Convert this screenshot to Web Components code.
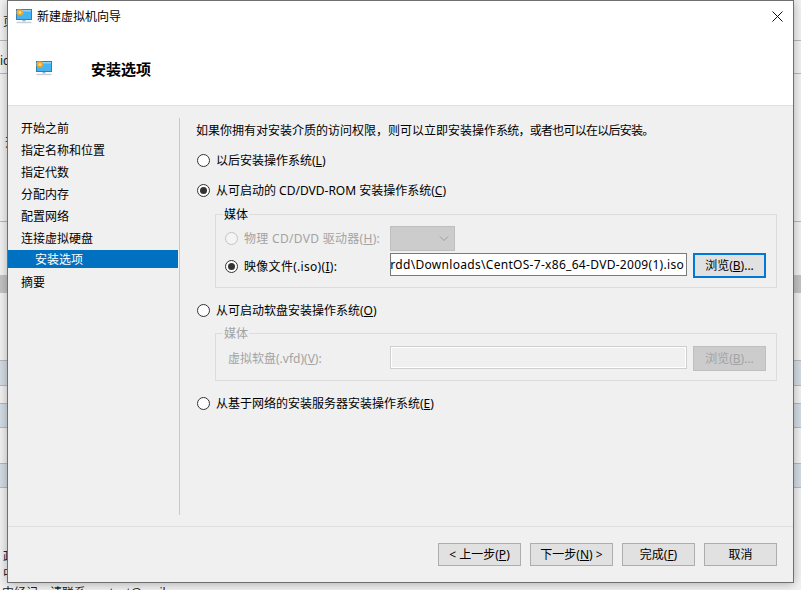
<!DOCTYPE html>
<html lang="zh-CN">
<head>
<meta charset="utf-8">
<title>新建虚拟机向导</title>
<style>
  html, body { margin: 0; height: 100%; overflow: hidden; }
  body {
    background: #f0f0f0;
    font: 12px/16px "Noto Sans", "Noto Sans CJK SC", sans-serif;
    color: #000;
  }
</style>
</head>
<body>
<host-backdrop></host-backdrop>
<wizard-window title-text="新建虚拟机向导" heading="安装选项">
  <wizard-nav slot="nav">
    <nav-item>开始之前</nav-item>
    <nav-item>指定名称和位置</nav-item>
    <nav-item>指定代数</nav-item>
    <nav-item>分配内存</nav-item>
    <nav-item>配置网络</nav-item>
    <nav-item>连接虚拟硬盘</nav-item>
    <nav-item selected>安装选项</nav-item>
    <nav-item>摘要</nav-item>
  </wizard-nav>

  <install-page>
    <div slot="intro">如果你拥有对安装介质的访问权限，则可以立即安装操作<span style="letter-spacing:-.75px">系统，或者也可以在以后安装。</span></div>
    <radio-option slot="later">以后安装操作系统(<u>L</u>)</radio-option>
    <radio-option slot="cd" checked>从可启动的 CD/DVD-ROM 安装操作系统(<u>C</u>)</radio-option>
    <group-box slot="cd-group" legend="媒体" style="--rows-top:3px">
      <media-row>
        <radio-option slot="label" disabled>物理 CD/DVD 驱动器(<u>H</u>):</radio-option>
        <drop-down slot="field"></drop-down>
      </media-row>
      <media-row>
        <radio-option slot="label" checked style="margin-top:2px">映像文件(.iso)(<u>I</u>):</radio-option>
        <path-field slot="field">rdd\Downloads\CentOS-7-x86_64-DVD-2009(1).iso</path-field>
        <win-button slot="action" focused wide>浏览(<u>B</u>)...</win-button>
      </media-row>
    </group-box>
    <radio-option slot="floppy">从可启动软盘安装操作系统(<u>O</u>)</radio-option>
    <group-box slot="floppy-group" legend="媒体" disabled style="--rows-top:4px">
      <media-row>
        <span slot="label">虚拟软盘(.vfd)(<u>V</u>):</span>
        <path-field slot="field" disabled></path-field>
        <win-button slot="action" disabled wide>浏览(<u>B</u>)...</win-button>
      </media-row>
    </group-box>
    <radio-option slot="network">从基于网络的安装服务器安装操作系统(<u>E</u>)</radio-option>
  </install-page>

  <win-button slot="footer" style="width:83px">&lt; 上一步(<u>P</u>)</win-button>
  <win-button slot="footer" style="width:83px">下一步(<u>N</u>) &gt;</win-button>
  <win-button slot="footer" style="width:73px">完成(<u>F</u>)</win-button>
  <win-button slot="footer" style="width:73px">取消</win-button>
</wizard-window>

<script>
const MONITOR_ICON = (w, h) => `
  <svg width="${w}" height="${h}" viewBox="0 0 16 16" aria-hidden="true">
    <rect x="0.5" y="1.5" width="15" height="10" fill="#45b4f5" stroke="#3a7ea8"/>
    <rect x="1" y="2" width="14" height="1.5" fill="#8ad4fa"/>
    <path d="M4 .6l.8 1.4 1.5-.7.1 1.6 1.6.3-.9 1.3.9 1.3-1.6.3-.1 1.6-1.5-.7L4 8.2l-.8-1.4-1.5.7-.1-1.6L0 5.6l.9-1.3L0 3l1.6-.3.1-1.6 1.5.7z" fill="#f5a623"/>
    <circle cx="3.9" cy="4.4" r="1.4" fill="#fbe08a"/>
    <rect x="6.5" y="12" width="3" height="1.5" fill="#9fb4c4"/>
    <rect x="0.5" y="13.8" width="15" height="1.4" fill="#c3d0da"/>
  </svg>`;

// what is visible of the application behind the dialog
class HostBackdrop extends HTMLElement {
  constructor() {
    super();
    this.attachShadow({ mode: 'open' });
    const lines = [40, 73, 221, 360, 385, 403, 427, 463, 487];
    const bands = [[361, 24], [404, 23], [464, 23]];
    this.shadowRoot.innerHTML = `
      <style>
        :host { position: absolute; inset: 0; display: block; overflow: hidden;
                background: #f3f3f3; color: #222; }
        .line { position: absolute; left: 0; right: 0; height: 1px; background: #b9b9b9; }
        .band { position: absolute; left: 0; right: 0; background: #d4dde6; }
        .grey { position: absolute; left: 0; right: 0; top: 275px; height: 18px; background: #c4c4c4; }
        .glyph { position: absolute; font-size: 12px; line-height: 16px; }
        .foot { position: absolute; left: 2px; top: 585px; white-space: nowrap; line-height: 16px; }
      </style>
      <div class="grey"></div>
      ${bands.map(([t, h]) => `<div class="band" style="top:${t}px;height:${h}px"></div>`).join('')}
      ${lines.map(t => `<div class="line" style="top:${t}px"></div>`).join('')}
      <span class="glyph" style="left:3px;top:14px">页</span>
      <span class="glyph" style="left:0;top:53px">ic</span>
      <span class="glyph" style="left:5px;top:135px">开</span>
      <span class="glyph" style="left:3px;top:549px">政</span>
      <span class="glyph" style="left:3px;top:566px">中</span>
      <span class="foot">中经记，请联系 contact@mail</span>
    `;
  }
}

class WizardWindow extends HTMLElement {
  constructor() {
    super();
    this.attachShadow({ mode: 'open' });
  }
  connectedCallback() {
    this.shadowRoot.innerHTML = `
      <style>
        :host {
          position: absolute; left: 7px; top: 0; width: 787px; height: 583px;
          box-sizing: border-box; display: flex; flex-direction: column;
          background: #f0f0f0; border: 1px solid #6f6f6f;
          box-shadow: 0 1px 10px rgba(0,0,0,.3);
        }
        .top { height: 104px; background: #fff; border-bottom: 1px solid #dfdfdf; flex: none; }
        .titlebar { height: 30px; display: flex; align-items: center; padding-left: 8px; gap: 5px; }
        .titlebar > span:first-of-type { padding-top: 2px; }
        .close { margin-left: auto; width: 32px; height: 30px; display: flex; align-items: center; justify-content: center; }
        .head { display: flex; align-items: center; padding: 14px 0 0 28px; height: 60px; box-sizing: border-box; }
        .head svg { flex: none; }
        h1 { margin: 2px 0 0 39px; font-size: 15px; line-height: 20px; font-weight: 700; }
        .body { flex: 1; display: flex; min-height: 0; }
        .nav { width: 170px; flex: none; padding-top: 11px; }
        .sep { width: 1px; background: #c9c9c9; margin: 12px 0 11px 1px; flex: none; }
        .page { flex: 1; min-width: 0; }
        .foot { height: 56px; flex: none; box-sizing: border-box; border-top: 1px solid #dfdfdf;
                display: flex; gap: 9px; justify-content: flex-end; padding: 16px 16px 0 0; }
      </style>
      <div class="top">
        <div class="titlebar">
          ${MONITOR_ICON(16, 16)}
          <span>${this.getAttribute('title-text')}</span>
          <span class="close">
            <svg width="11" height="11" viewBox="0 0 11 11" aria-hidden="true"><path d="M.5.5l10 10M10.5.5l-10 10" stroke="#111" fill="none"/></svg>
          </span>
        </div>
        <div class="head">
          ${MONITOR_ICON(16, 16)}
          <h1>${this.getAttribute('heading')}</h1>
        </div>
      </div>
      <div class="body">
        <div class="nav"><slot name="nav"></slot></div>
        <div class="sep"></div>
        <div class="page"><slot></slot></div>
      </div>
      <div class="foot"><slot name="footer"></slot></div>
    `;
  }
}

class WizardNav extends HTMLElement {
  constructor() {
    super();
    this.attachShadow({ mode: 'open' });
    this.shadowRoot.innerHTML = `<style>:host { display: block; }</style><slot></slot>`;
  }
}

class NavItem extends HTMLElement {
  constructor() {
    super();
    this.attachShadow({ mode: 'open' });
    this.shadowRoot.innerHTML = `
      <style>
        :host { display: block; height: 22px; line-height: 24px; padding-left: 13px; white-space: nowrap; }
        :host([selected]) { height: 18px; line-height: 20px; margin: 1px 0 3px; padding-left: 27px;
                            background: #0070c0; color: #fff; }
      </style>
      <slot></slot>`;
  }
}

class InstallPage extends HTMLElement {
  constructor() {
    super();
    this.attachShadow({ mode: 'open' });
    this.shadowRoot.innerHTML = `
      <style>
        :host { display: flex; flex-direction: column; align-items: flex-start; padding: 17px 0 0 16px; }
        ::slotted([slot="intro"]) { line-height: 16px; margin-bottom: 12px; white-space: nowrap; }
        ::slotted(radio-option) { margin-left: 1px; }
        ::slotted([slot="cd"]) { margin-top: 11px; }
        ::slotted(group-box) { margin-left: 19px; }
        ::slotted([slot="cd-group"]) { margin-top: 14px; }
        ::slotted([slot="floppy"]) { margin-top: 13px; }
        ::slotted([slot="floppy-group"]) { margin-top: 13px; }
        ::slotted([slot="network"]) { margin-top: 13px; }
      </style>
      <slot name="intro"></slot>
      <slot name="later"></slot>
      <slot name="cd"></slot>
      <slot name="cd-group"></slot>
      <slot name="floppy"></slot>
      <slot name="floppy-group"></slot>
      <slot name="network"></slot>`;
  }
}

class RadioOption extends HTMLElement {
  constructor() {
    super();
    this.attachShadow({ mode: 'open' });
    this.shadowRoot.innerHTML = `
      <style>
        :host { display: inline-flex; align-items: center; gap: 6px; height: 19px; white-space: nowrap; }
        :host([disabled]) { color: #a3a3a3; }
        .dot { width: 13px; height: 13px; box-sizing: border-box; border: 1px solid #333; border-radius: 50%;
               background: #fff; display: flex; align-items: center; justify-content: center; flex: none; }
        :host([disabled]) .dot { border-color: #c4c4c4; background: #f4f4f4; }
        i { width: 7px; height: 7px; border-radius: 50%; background: #333; display: none; }
        :host([checked]) i { display: block; }
      </style>
      <span class="dot"><i></i></span><span><slot></slot></span>`;
  }
}

class GroupBox extends HTMLElement {
  constructor() {
    super();
    this.attachShadow({ mode: 'open' });
  }
  connectedCallback() {
    this.shadowRoot.innerHTML = `
      <style>
        :host { display: block; width: 562px; box-sizing: border-box; border: 1px solid #dcdcdc; padding: 0 10px 0 9px; }
        :host([disabled]) .legend { color: #a3a3a3; }
        .legend { width: fit-content; margin: -8px 0 0 -2px; padding: 0 1px; background: #f0f0f0; line-height: 16px; }
        .rows { display: flex; flex-direction: column; gap: 2px; padding: var(--rows-top, 3px) 0 9px; }
      </style>
      <div class="legend">${this.getAttribute('legend')}</div>
      <div class="rows"><slot></slot></div>`;
  }
}

class MediaRow extends HTMLElement {
  constructor() {
    super();
    this.attachShadow({ mode: 'open' });
    this.shadowRoot.innerHTML = `
      <style>
        :host { display: grid; grid-template-columns: 159px 297px 73px; column-gap: 6px; align-items: start; }
        ::slotted([slot="label"]) { align-self: center; }
        ::slotted(radio-option) { letter-spacing: .3px; }
        ::slotted(span[slot="label"]) { color: #a3a3a3; padding-left: 3px; }
      </style>
      <slot name="label"></slot><slot name="field"></slot><slot name="action"></slot>`;
  }
}

class DropDown extends HTMLElement {
  constructor() {
    super();
    this.attachShadow({ mode: 'open' });
    this.shadowRoot.innerHTML = `
      <style>
        :host { display: flex; width: 65px; height: 25px; box-sizing: border-box; background: #ccc;
                border: 1px solid #bfbfbf; align-items: center; justify-content: flex-end; padding-right: 5px; }
      </style>
      <svg width="10" height="6" viewBox="0 0 10 6" aria-hidden="true"><path d="M1 .5l4 4 4-4" fill="none" stroke="#9c9c9c"/></svg>`;
  }
}

class PathField extends HTMLElement {
  constructor() {
    super();
    this.attachShadow({ mode: 'open' });
    this.shadowRoot.innerHTML = `
      <style>
        :host { display: flex; justify-content: flex-end; align-items: center; width: 297px; height: 23px;
                box-sizing: border-box; background: #fff; border: 1px solid #7a7a7a; padding-right: 2px;
                overflow: hidden; white-space: nowrap; letter-spacing: .3px; }
        :host([disabled]) { background: #f0f0f0; border-color: #cfcfcf; box-shadow: inset 0 0 0 1px #fff; }
        span { flex: none; }
      </style>
      <span><slot></slot></span>`;
  }
}

class WinButton extends HTMLElement {
  constructor() {
    super();
    this.attachShadow({ mode: 'open' });
    this.shadowRoot.innerHTML = `
      <style>
        :host { display: flex; align-items: center; justify-content: center; height: 23px; box-sizing: border-box;
                background: #e1e1e1; border: 1px solid #adadad; white-space: nowrap; flex: none; padding-top: 1px; }
        :host([wide]) { width: 73px; height: 25px; padding-top: 0; }
        :host([focused]) { border: 2px solid #0078d7; }
        :host([disabled]) { background: #ccc; border-color: #bfbfbf; color: #a3a3a3; }
      </style>
      <span><slot></slot></span>`;
  }
}

customElements.define('host-backdrop', HostBackdrop);
customElements.define('wizard-window', WizardWindow);
customElements.define('wizard-nav', WizardNav);
customElements.define('nav-item', NavItem);
customElements.define('install-page', InstallPage);
customElements.define('radio-option', RadioOption);
customElements.define('group-box', GroupBox);
customElements.define('media-row', MediaRow);
customElements.define('drop-down', DropDown);
customElements.define('path-field', PathField);
customElements.define('win-button', WinButton);
</script>
</body>
</html>
